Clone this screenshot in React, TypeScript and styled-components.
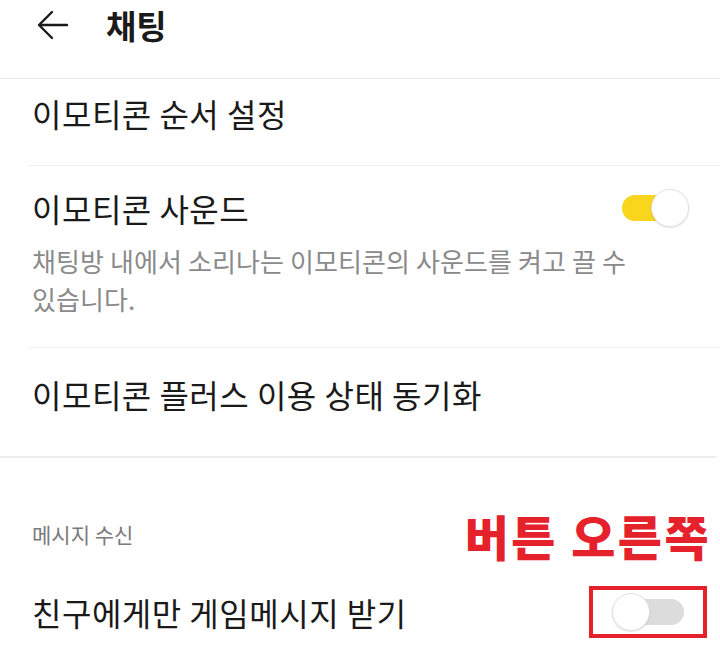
import React from 'react'
import styled, { createGlobalStyle } from 'styled-components'

const GlobalStyle = createGlobalStyle`
  html, body {
    margin: 0;
    padding: 0;
    background: #ffffff;
  }
  body {
    font-family: "Noto Sans CJK KR", "Noto Sans", sans-serif;
    color: #1a1a1a;
  }
`

const Screen = styled.div`
  width: 720px;
  height: 645px;
  overflow: hidden;
  background: #fff;
`

const Header = styled.header`
  height: 79px;
  display: flex;
  align-items: center;
  border-bottom: 1px solid #e6e6e6;
  padding-left: 36px;
  box-sizing: border-box;
  padding-bottom: 28px;
`

const BackButton = styled.button`
  border: none;
  background: none;
  padding: 0;
  width: 34px;
  height: 34px;
  display: flex;
  align-items: center;
  justify-content: center;
  color: #1a1a1a;
`

const Title = styled.h1`
  margin: 0 0 0 36px;
  font-size: 33px;
  font-weight: 700;
  color: #1a1a1a;
`

const Group = styled.div`
  margin-left: 28px;
`

const Row = styled.div<{ $height: number; $lift?: number; $last?: boolean }>`
  height: ${p => p.$height}px;
  display: flex;
  align-items: center;
  padding-left: 4px;
  padding-bottom: ${p => p.$lift ?? 0}px;
  box-sizing: border-box;
  border-bottom: ${p => (p.$last ? 'none' : '1px solid #f0f0f0')};
`

const TallRow = styled(Row)`
  flex-direction: column;
  align-items: stretch;
  justify-content: flex-start;
  padding-top: 20px;
`

const LabelLine = styled.div`
  display: flex;
  align-items: center;
  justify-content: space-between;
`

const Label = styled.div`
  flex: 1;
  min-width: 0;
  font-size: 32px;
  line-height: 44px;
  color: #1a1a1a;
  letter-spacing: 0.5px;
`

const Desc = styled.div`
  margin-top: 12px;
  font-size: 26px;
  line-height: 38px;
  color: #8a8a8a;
  max-width: 610px;
  letter-spacing: 0.1px;
`

const Divider = styled.div`
  height: 2px;
  background: #ededed;
  width: 716px;
`

const SectionHead = styled.div`
  height: 130px;
  display: flex;
  align-items: center;
  justify-content: space-between;
  padding-left: 32px;
  padding-top: 22px;
  box-sizing: border-box;
`

const SectionTitle = styled.div`
  font-size: 21px;
  color: #7a7a7a;
`

const Annotation = styled.div`
  font-size: 48px;
  line-height: 52px;
  font-weight: 900;
  color: #e5212b;
  letter-spacing: 2.4px;
  margin-right: 9px;
  margin-top: 2px;
`

const ToggleSlot = styled.div<{ $outlined?: boolean }>`
  width: ${p => (p.$outlined ? 118 : 100)}px;
  height: ${p => (p.$outlined ? 52 : 44)}px;
  display: flex;
  align-items: center;
  justify-content: center;
  padding-left: ${p => (p.$outlined ? 12 : 0)}px;
  box-sizing: border-box;
  border: ${p => (p.$outlined ? '4px solid #e5212b' : 'none')};
`

const Track = styled.div<{ $on: boolean }>`
  position: relative;
  width: 60px;
  height: 26px;
  border-radius: 13px;
  background: ${p => (p.$on ? '#f9d51c' : '#dcdcdc')};
`

const Knob = styled.div<{ $on: boolean }>`
  position: absolute;
  top: 50%;
  left: ${p => (p.$on ? '29px' : '-12px')};
  width: 38px;
  height: 38px;
  margin-top: -19px;
  border-radius: 50%;
  background: #fff;
  border: 1px solid #e2e2e2;
  box-sizing: border-box;
  box-shadow: 0 1px 2px rgba(0, 0, 0, 0.12);
`

function Toggle({ on, outlined }: { on: boolean; outlined?: boolean }) {
  return (
    <ToggleSlot $outlined={outlined}>
      <Track $on={on}>
        <Knob $on={on} />
      </Track>
    </ToggleSlot>
  )
}

const ToggleCell = styled.div<{ $right: number }>`
  margin-right: ${p => p.$right}px;
`

export default function App() {
  return (
    <Screen>
      <GlobalStyle />
      <Header>
        <BackButton aria-label="back">
          <svg width="32" height="30" viewBox="0 0 32 30" fill="none" stroke="#1a1a1a" strokeWidth="2.4" strokeLinecap="round" strokeLinejoin="round">
            <path d="M30 15H3" />
            <path d="M15 2L2 15l13 13" />
          </svg>
        </BackButton>
        <Title>채팅</Title>
      </Header>

      <Group>
        <Row $height={87} $lift={18}>
          <Label>이모티콘 순서 설정</Label>
        </Row>
        <TallRow $height={182}>
          <LabelLine>
            <Label>이모티콘 사운드</Label>
            <ToggleCell $right={18}>
              <Toggle on />
            </ToggleCell>
          </LabelLine>
          <Desc>채팅방 내에서 소리나는 이모티콘의 사운드를 켜고 끌 수 있습니다.</Desc>
        </TallRow>
        <Row $height={108} $lift={16} $last>
          <Label>이모티콘 플러스 이용 상태 동기화</Label>
        </Row>
      </Group>

      <Divider />

      <SectionHead>
        <SectionTitle>메시지 수신</SectionTitle>
        <Annotation>버튼 오른쪽</Annotation>
      </SectionHead>

      <Group>
        <Row $height={53} $lift={6} $last>
          <Label>친구에게만 게임메시지 받기</Label>
          <ToggleCell $right={13}>
            <Toggle on={false} outlined />
          </ToggleCell>
        </Row>
      </Group>
    </Screen>
  )
}
